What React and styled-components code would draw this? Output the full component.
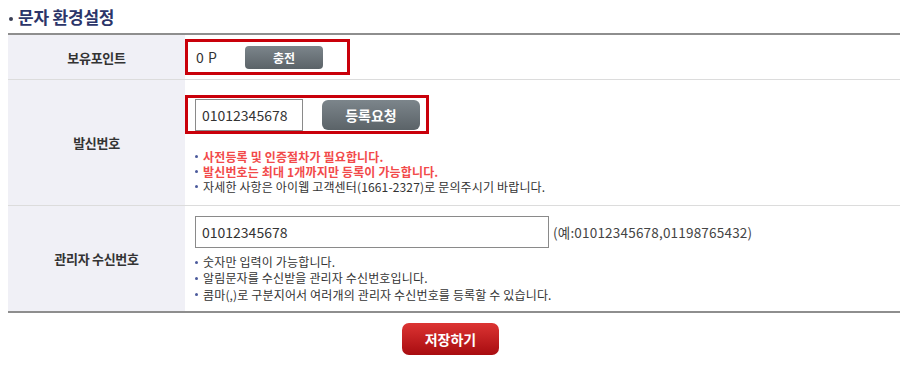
import React from 'react'
import styled, { createGlobalStyle } from 'styled-components'

const GlobalStyle = createGlobalStyle`
    body {
        margin: 0;
        padding: 0 0 0 8px;
        font-family: "Noto Sans CJK KR", "Liberation Sans", sans-serif;
        color: #333;
        background: #fff;
    }
`

const Page = styled.div`
    width: 892px;
`

const Title = styled.h3`
    margin: 0;
    height: 33px;
    display: flex;
    align-items: center;
    gap: 4px;
    font-size: 17px;
    font-weight: 700;
    color: #2b3569;
    letter-spacing: -0.2px;
    &::before {
        content: '';
        width: 4px;
        height: 4px;
        border-radius: 50%;
        background: #3a3f55;
        margin: 5px 1px 0 1px;
    }
`

const Table = styled.div`
    border-top: 2px solid #8e8e8e;
    border-bottom: 2px solid #8e8e8e;
`

const Row = styled.div`
    display: grid;
    grid-template-columns: 177px 1fr;
    min-height: ${ p => p.height }px;
    & + & {
        border-top: 1px solid #dcdcdc;
    }
`

const Label = styled.div`
    background: #f0f0f6;
    display: flex;
    align-items: center;
    justify-content: center;
    font-size: 13px;
    font-weight: 700;
    color: #333;
    letter-spacing: -0.3px;
`

const Cell = styled.div`
    padding: ${ p => p.pad || '0' };
    display: flex;
    flex-direction: column;
    align-items: flex-start;
`

const Highlight = styled.div`
    border: 3px solid #c9000a;
    display: flex;
    align-items: center;
    height: ${ p => p.height }px;
    width: ${ p => p.width }px;
    box-sizing: border-box;
    padding-left: ${ p => p.left }px;
`

const Points = styled.span`
    font-size: 14px;
    color: #333;
    width: 49px;
    letter-spacing: 0.5px;
`

const GrayButton = styled.button`
    border: 0;
    border-radius: ${ p => p.big ? 6 : 4 }px;
    width: ${ p => p.w }px;
    height: ${ p => p.h }px;
    margin-left: ${ p => p.ml || 0 }px;
    background: linear-gradient(to bottom, #7c858b, #5b6368);
    color: #fff;
    font-family: inherit;
    font-weight: 700;
    font-size: ${ p => p.big ? 14 : 12 }px;
    padding: 0;
    cursor: pointer;
`

const Input = styled.input`
    box-sizing: border-box;
    width: ${ p => p.w }px;
    height: 32px;
    border: 1px solid #8a8a8a;
    padding: 0 6px;
    font-family: "Noto Sans CJK KR", "Liberation Sans", sans-serif;
    font-size: 14px;
    color: #333;
    outline: none;
`

const InputLine = styled.div`
    display: flex;
    align-items: center;
    gap: 4px;
    font-size: 13.5px;
    letter-spacing: 0.2px;
    color: #444;
`

const Notes = styled.ul`
    list-style: none;
    margin: ${ p => p.mt }px 0 0 0;
    padding: 0 0 0 ${ p => p.pl || 0 }px;
`

const Note = styled.li`
    display: flex;
    align-items: center;
    gap: 5px;
    height: ${ p => p.lh || 15 }px;
    font-size: 12px;
    letter-spacing: 0.15px;
    line-height: 1;
    color: ${ p => p.warn ? '#f24a4a' : '#333' };
    font-weight: ${ p => p.warn ? 700 : 400 };
    &::before {
        content: '';
        width: 3px;
        height: 3px;
        border-radius: 50%;
        background: #4b5a9c;
        flex: none;
    }
`

const Footer = styled.div`
    display: flex;
    justify-content: center;
    padding: 10px 7px 0 0;
`

const SaveButton = styled.button`
    width: 97px;
    height: 32px;
    border: 0;
    border-radius: 7px;
    background: linear-gradient(to bottom, #dc3433, #a80c10);
    color: #fff;
    font-family: inherit;
    font-weight: 700;
    font-size: 14px;
    padding: 0;
    cursor: pointer;
`

export default function App() {
    return (
        <Page>
            <GlobalStyle />
            <Title>문자 환경설정</Title>
            <Table>
                <Row height={ 44 }>
                    <Label>보유포인트</Label>
                    <Cell pad="4px 0 0 0">
                        <Highlight height={ 36 } width={ 165 } left={ 8 }>
                            <Points>0 P</Points>
                            <GrayButton w={ 78 } h={ 23 }>충전</GrayButton>
                        </Highlight>
                    </Cell>
                </Row>
                <Row height={ 125 }>
                    <Label>발신번호</Label>
                    <Cell pad="15px 0 0 0">
                        <Highlight height={ 39 } width={ 244 } left={ 7 }>
                            <Input w={ 108 } defaultValue="01012345678" />
                            <GrayButton big w={ 98 } h={ 30 } ml={ 19 }>등록요청</GrayButton>
                        </Highlight>
                        <Notes mt={ 15 } pl={ 10 }>
                            <Note warn>사전등록 및 인증절차가 필요합니다.</Note>
                            <Note warn>발신번호는 최대 1개까지만 등록이 가능합니다.</Note>
                            <Note>자세한 사항은 아이웹 고객센터(1661-2327)로 문의주시기 바랍니다.</Note>
                        </Notes>
                    </Cell>
                </Row>
                <Row height={ 105 }>
                    <Label>관리자 수신번호</Label>
                    <Cell pad="10px 0 0 10px">
                        <InputLine>
                            <Input w={ 354 } defaultValue="01012345678" />
                            (예:01012345678,01198765432)
                        </InputLine>
                        <Notes mt={ 6 }>
                            <Note lh={ 16.3 }>숫자만 입력이 가능합니다.</Note>
                            <Note lh={ 16.3 }>알림문자를 수신받을 관리자 수신번호입니다.</Note>
                            <Note lh={ 16.3 }>콤마(,)로 구분지어서 여러개의 관리자 수신번호를 등록할 수 있습니다.</Note>
                        </Notes>
                    </Cell>
                </Row>
            </Table>
            <Footer>
                <SaveButton>저장하기</SaveButton>
            </Footer>
        </Page>
    )
}
